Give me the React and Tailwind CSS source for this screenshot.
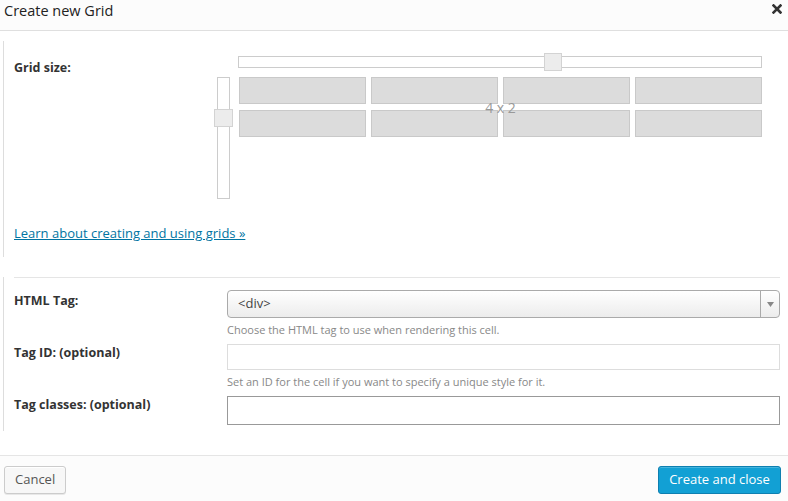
export default function App() {
  const cells = [0, 1, 2, 3, 4, 5, 6, 7];

  return (
    <div className="flex h-[501px] w-[788px] flex-col bg-white text-[#333]" style={{ fontFamily: '"Open Sans", "Liberation Sans", sans-serif' }}>
      {/* header */}
      <div className="flex h-[31px] items-start justify-between border-b border-[#dfdfdf] bg-[#fcfcfc] pl-[4px] pr-[6px] pt-[1px]">
        <h1 className="text-[14.5px] leading-[20px] text-[#222]">Create new Grid</h1>
        <svg width="10" height="10" viewBox="0 0 10 10" className="mt-[3px]">
          <path d="M1.5 1.5 L8.5 8.5 M8.5 1.5 L1.5 8.5" stroke="#333" strokeWidth="2.6" strokeLinecap="square" />
        </svg>
      </div>

      {/* grid size section */}
      <div className="ml-[3px] mt-[10px] h-[216px] border-l border-[#ddd] pl-[10px]">
        <div className="flex">
          <div className="w-[200px] pt-[18px] text-[12.5px] font-bold">Grid size:</div>
          <div className="w-[548px]">
            <div className="relative ml-[24px] mt-[15px] h-[12px] w-[524px] border border-[#ccc] bg-white">
              <div className="absolute left-[305px] top-[-4px] h-[18px] w-[18px] border border-[#d3d3d3] bg-[#ececec]" />
            </div>
            <div className="mt-[9px] flex">
              <div className="relative ml-[3px] h-[122px] w-[13px] border border-[#ccc] bg-white">
                <div className="absolute left-[-4px] top-[31px] h-[18px] w-[19px] border border-[#d3d3d3] bg-[#ececec]" />
              </div>
              <div className="relative ml-[9px] w-[523px]">
                <div className="grid grid-cols-4 gap-x-[5px] gap-y-[6px]">
                  {cells.map((c) => (
                    <div key={c} className="h-[27px] border border-[#c9c9c9] bg-[#dcdcdc]" />
                  ))}
                </div>
                <div className="absolute left-0 top-0 flex h-[60px] w-full items-center justify-center text-[14px] text-[#999]">
                  4 x 2
                </div>
              </div>
            </div>
          </div>
        </div>
        <a href="#" className="mt-[25px] block text-[13px] text-[#0074a2] underline">
          Learn about creating and using grids »
        </a>
      </div>

      {/* cell settings section */}
      <div className="ml-[3px] mt-[20px] border-l border-[#ddd] pb-[6px] pl-[10px]">
        <div className="mr-[8px] border-t border-[#e5e5e5] pt-[12px]">
          <div className="flex">
            <div className="w-[213px] pt-[2px] text-[12.5px] font-bold">HTML Tag:</div>
            <div className="flex-1">
              <div className="flex h-[28px] items-stretch rounded-[4px] border border-[#aaa] bg-gradient-to-b from-white to-[#ececec]">
                <div className="flex flex-1 items-center pl-[10px] text-[13px] text-[#444]">&lt;div&gt;</div>
                <div className="flex w-[19px] items-center justify-center border-l border-[#aaa]">
                  <svg width="7" height="5" viewBox="0 0 7 5">
                    <path d="M0 0 H7 L3.5 5 Z" fill="#888" />
                  </svg>
                </div>
              </div>
              <p className="mt-[4px] text-[11px] leading-[16px] text-[#888]">Choose the HTML tag to use when rendering this cell.</p>
            </div>
          </div>

          <div className="mt-[6px] flex">
            <div className="w-[213px] text-[12.5px] font-bold">Tag ID: (optional)</div>
            <div className="flex-1">
              <div className="h-[26px] border border-[#ddd] bg-white" />
              <p className="mt-[4px] text-[11px] leading-[16px] text-[#888]">Set an ID for the cell if you want to specify a unique style for it.</p>
            </div>
          </div>

          <div className="mt-[6px] flex">
            <div className="w-[213px] text-[12.5px] font-bold">Tag classes: (optional)</div>
            <div className="h-[29px] flex-1 border border-[#999] bg-white" />
          </div>
        </div>
      </div>

      {/* footer */}
      <div className="mt-auto flex h-[46px] items-center justify-between border-t border-[#e5e5e5] bg-[#fcfcfc] pl-[4px] pr-[7px] pt-[2px]">
        <button className="h-[28px] rounded-[3px] border border-[#ccc] bg-[#f7f7f7] px-[10px] text-[13px] text-[#555] shadow-[0_1px_0_#fff_inset,0_1px_0_rgba(0,0,0,0.08)]">
          Cancel
        </button>
        <button className="h-[28px] w-[123px] rounded-[3px] border border-[#0e7fb0] bg-[#12a0d4] text-[13px] text-white shadow-[0_1px_0_rgba(120,200,230,0.5)_inset]">
          Create and close
        </button>
      </div>
    </div>
  );
}
